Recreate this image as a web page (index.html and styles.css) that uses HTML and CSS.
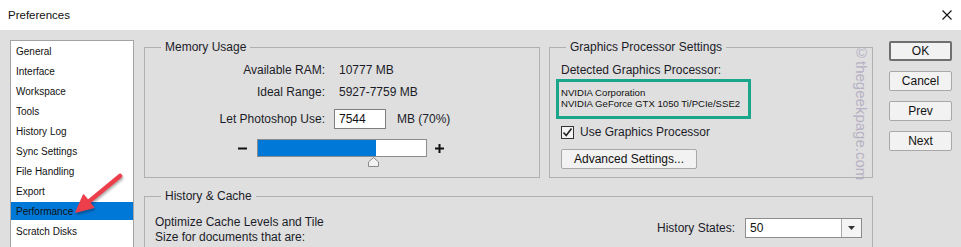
FILE: index.html
```html
<!DOCTYPE html>
<html lang="en">
<head>
    <meta charset="UTF-8">
    <title>Preferences</title>
    <link rel="stylesheet" href="styles.css">
</head>
<body>

    <!-- Window title -->
    <div class="titlebar">
        <span class="title">Preferences</span>
        <svg class="close" width="10" height="10" viewBox="0 0 10 10">
            <path d="M0.5 0.5 L9.5 9.5 M9.5 0.5 L0.5 9.5" stroke="#111" stroke-width="1.1" fill="none"/>
        </svg>
    </div>

    <div class="dialog">
        <!-- Category list -->
        <ul class="nav">
            <li>General</li>
            <li>Interface</li>
            <li>Workspace</li>
            <li>Tools</li>
            <li>History Log</li>
            <li>Sync Settings</li>
            <li>File Handling</li>
            <li>Export</li>
            <li class="active">Performance</li>
            <li>Scratch Disks</li>
        </ul>

        <div class="panels">
            <div class="top-row">
                <!-- Memory Usage -->
                <fieldset class="group memory">
                    <legend>Memory Usage</legend>
                    <div class="mem-grid">
                        <span class="label">Available RAM:</span>
                        <span class="value">10777 MB</span>
                        <span class="label">Ideal Range:</span>
                        <span class="value">5927-7759 MB</span>
                        <span class="label">Let Photoshop Use:</span>
                        <span class="use">
                            <input class="num" type="text" value="7544">
                            <span>MB (70%)</span>
                        </span>
                    </div>
                    <div class="slider">
                        <svg width="9" height="9" viewBox="0 0 9 9"><rect x="0" y="3.5" width="9" height="2" fill="#111"/></svg>
                        <div class="track">
                            <div class="fill" style="width: 70%"></div>
                            <svg class="thumb" width="11" height="10" viewBox="0 0 11 10">
                                <path d="M5.5 0.5 L10.5 5 L10.5 9.5 L0.5 9.5 L0.5 5 Z" fill="#f2f2f2" stroke="#8a8a8a"/>
                            </svg>
                        </div>
                        <svg width="9" height="9" viewBox="0 0 9 9"><rect x="0" y="3.5" width="9" height="2" fill="#111"/><rect x="3.5" y="0" width="2" height="9" fill="#111"/></svg>
                    </div>
                </fieldset>

                <!-- Graphics Processor -->
                <fieldset class="group gpu">
                    <legend>Graphics Processor Settings</legend>
                    <p class="detected">Detected Graphics Processor:</p>
                    <div class="gpu-name">
                        NVIDIA Corporation<br>
                        NVIDIA GeForce GTX 1050 Ti/PCIe/SSE2
                    </div>
                    <label class="check">
                        <span class="box">
                            <svg width="11" height="11" viewBox="0 0 11 11">
                                <path d="M1.5 5.5 L4.2 8.5 L9.5 1.5" stroke="#222" stroke-width="1.6" fill="none"/>
                            </svg>
                        </span>
                        Use Graphics Processor
                    </label>
                    <button class="btn wide">Advanced Settings...</button>
                </fieldset>
            </div>

            <!-- History & Cache -->
            <fieldset class="group history">
                <legend>History &amp; Cache</legend>
                <div class="history-row">
                    <p class="optimize">Optimize Cache Levels and Tile<br>Size for documents that are:</p>
                    <div class="states">
                        <span>History States:</span>
                        <div class="select">
                            <span class="select-value">50</span>
                            <span class="select-arrow">
                                <svg width="7" height="4" viewBox="0 0 7 4"><path d="M0 0 H7 L3.5 4 Z" fill="#333"/></svg>
                            </span>
                        </div>
                    </div>
                </div>
            </fieldset>
        </div>

        <!-- Dialog buttons -->
        <div class="buttons">
            <button class="btn default">OK</button>
            <button class="btn">Cancel</button>
            <button class="btn">Prev</button>
            <button class="btn">Next</button>
        </div>

        <!-- Annotation arrow pointing at Performance -->
        <svg class="arrow" width="60" height="48" viewBox="0 0 60 48">
            <g fill="#ec3f4b" stroke="#ec3f4b">
                <line x1="50" y1="6" x2="19" y2="31.5" stroke-width="4.5" stroke-linecap="round"/>
                <polygon points="6,42 23.5,37.5 13.5,25" stroke-width="1.5" stroke-linejoin="round"/>
            </g>
        </svg>

        <!-- Watermark -->
        <span class="watermark">©thegeekpage.com</span>
    </div>

</body>
</html>
```

FILE: styles.css
```css
body {
    margin: 0;
    width: 961px;
    height: 247px;
    overflow: hidden;
    font-family: "Liberation Sans", Arial, sans-serif;
    font-size: 12px;
    color: #1c1c28;
    background-color: #dfdfdf;
}
.titlebar {
    height: 30px;
    background-color: white;
    display: flex;
    align-items: center;
    justify-content: space-between;
    padding: 0 8px;
}
.titlebar .title {
    font-size: 11.5px;
    color: #111;
}
.titlebar .close {
    margin-right: 1px;
}
.dialog {
    position: relative;
    display: flex;
    align-items: flex-start;
    padding: 10px 0 0 10px;
}
/* Category list */
.nav {
    list-style-type: none;
    margin: 0;
    padding: 1px 0 0 0;
    width: 124px;
    height: 220px;
    box-sizing: border-box;
    background-color: white;
    border: 1px solid #a3a3a3;
    font-size: 10px;
    color: #111;
}
.nav li {
    height: 18px;
    line-height: 19px;
    margin-bottom: 2px;
    padding-left: 5px;
}
.nav li.active {
    background-color: #0078d7;
}
/* Group boxes */
.panels {
    margin-left: 10px;
    width: 729px;
}
.top-row {
    display: flex;
    gap: 9px;
}
.group {
    margin: 0;
    padding: 0;
    border: 1px solid #b0b0b0;
    box-sizing: border-box;
    min-width: 0;
}
.group legend {
    margin-left: 16px;
    padding: 0 4px;
    line-height: 14px;
    font-size: 12px;
}
.memory {
    width: 396px;
    height: 138px;
}
.gpu {
    width: 324px;
    height: 138px;
    padding-left: 11px;
}
.gpu legend {
    margin-left: 5px;
}
.history {
    margin-top: 11px;
    height: 90px;
}
/* Memory usage */
.mem-grid {
    display: grid;
    grid-template-columns: 180px auto;
    grid-template-rows: 14px 14px 24px;
    column-gap: 9px;
    row-gap: 8px;
    align-items: center;
    margin-top: 9px;
}
.mem-grid .label {
    text-align: right;
}
.mem-grid .value {
    padding-left: 5px;
}
.use {
    display: flex;
    align-items: center;
    gap: 11px;
}
.num {
    width: 52px;
    height: 20px;
    box-sizing: border-box;
    border: 1px solid #7d7d7d;
    padding: 0 4px;
    font-family: inherit;
    font-size: 12px;
    color: #111;
    background-color: white;
    outline: none;
}
.slider {
    display: flex;
    align-items: center;
    gap: 10px;
    margin: 8px 0 0 93px;
}
.slider svg:last-child {
    margin-left: -2px;
}
.track {
    position: relative;
    width: 170px;
    height: 18px;
    box-sizing: border-box;
    border: 1px solid #8c8c8c;
    background-color: white;
}
.fill {
    height: 100%;
    background-color: #0078d7;
}
.thumb {
    position: absolute;
    left: calc(70% - 6px);
    top: 17px;
}
/* Graphics processor */
.detected {
    margin: 9px 0 0 0;
    line-height: 14px;
}
.gpu-name {
    width: 195px;
    box-sizing: border-box;
    margin: 2px 0 0 -5px;
    padding: 5px 0 7px 2px;
    border: 3px solid #1aa68a;
    font-size: 9.6px;
    line-height: 11px;
    color: #111;
}
.check {
    display: flex;
    align-items: center;
    gap: 6px;
    margin-top: 6px;
    height: 14px;
}
.check .box {
    width: 13px;
    height: 13px;
    box-sizing: border-box;
    border: 1px solid #333;
    background-color: #f4f4f4;
    display: flex;
    align-items: center;
    justify-content: center;
}
.btn {
    width: 63px;
    height: 20px;
    padding: 0;
    border: 1px solid #a8a8a8;
    border-radius: 2px;
    background-color: #f2f2f2;
    font-family: inherit;
    font-size: 12px;
    color: #111;
}
.btn.wide {
    width: 136px;
    margin-top: 10px;
}
.btn.default {
    border: 2px solid #6f6f6f;
}
/* History & cache */
.history-row {
    display: flex;
    justify-content: space-between;
    align-items: flex-start;
    padding: 12px 10px 0 10px;
}
.optimize {
    margin: 0;
    line-height: 15px;
}
.states {
    display: flex;
    align-items: center;
    gap: 10px;
    margin-top: 3px;
}
.select {
    display: flex;
    width: 117px;
    height: 20px;
    box-sizing: border-box;
    border: 1px solid #8c8c8c;
    background-color: white;
}
.select-value {
    flex: 1;
    line-height: 18px;
    padding-left: 4px;
    color: #111;
}
.select-arrow {
    width: 19px;
    border-left: 1px solid #a8a8a8;
    background-color: #f4f4f4;
    display: flex;
    align-items: center;
    justify-content: center;
}
/* Right buttons */
.buttons {
    display: flex;
    flex-direction: column;
    gap: 10px;
    margin: 1px 0 0 16px;
}
/* Overlays */
.arrow {
    position: absolute;
    left: 70px;
    top: 140px;
    filter: drop-shadow(1px 2px 1px rgba(0, 0, 0, 0.3));
}
.watermark {
    position: absolute;
    left: 852px;
    top: 14px;
    writing-mode: vertical-rl;
    font-size: 15px;
    line-height: 18px;
    color: #b6b1c4;
}
```
